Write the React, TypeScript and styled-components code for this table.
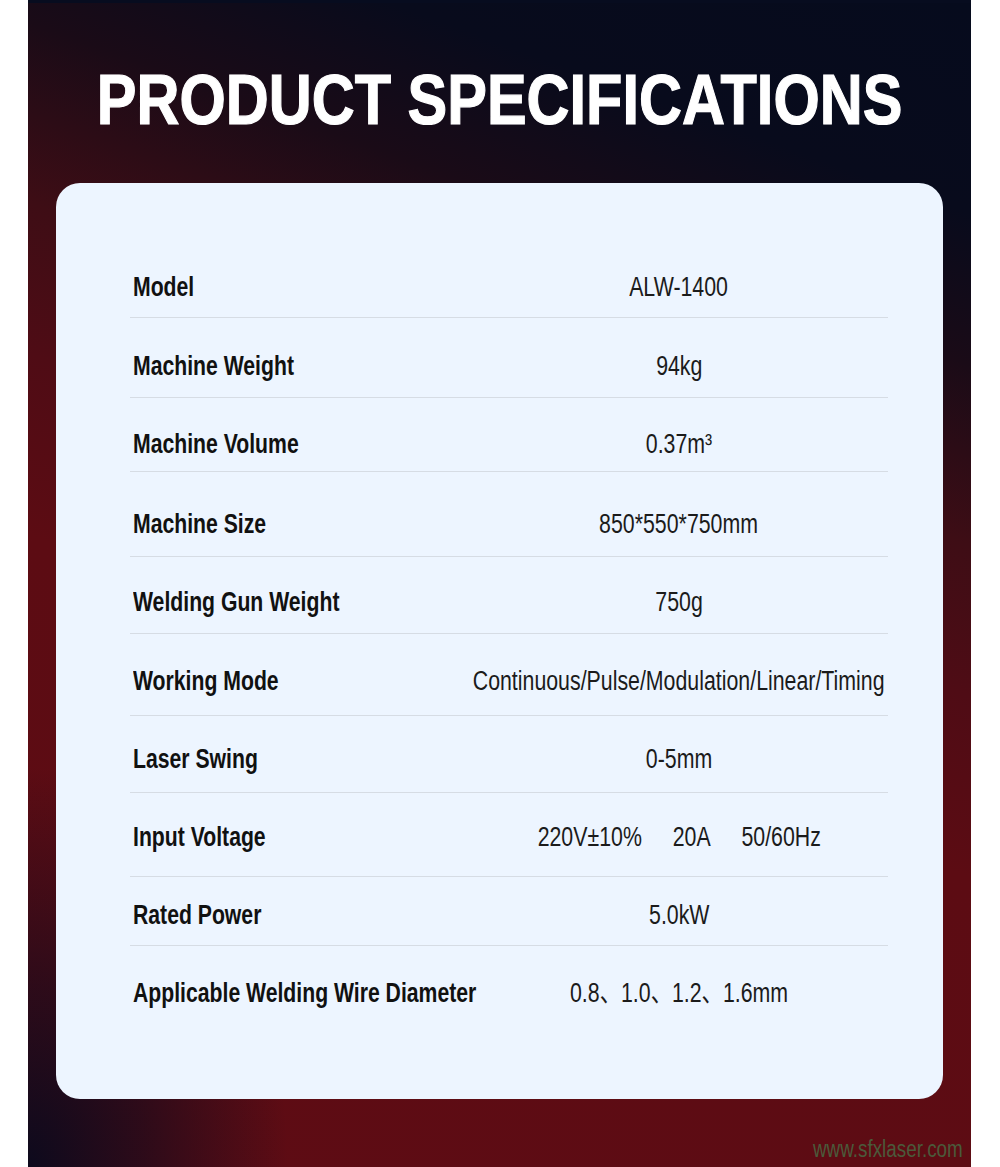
import React from "react"
import styled, { createGlobalStyle } from "styled-components"

const GlobalStyle = createGlobalStyle`
  html, body {
    margin: 0;
    padding: 0;
    background: #fff;
  }
  body {
    font-family: "Liberation Sans", Arial, "Noto Sans CJK SC", sans-serif;
  }
`

type Spec = {
  label: string
  value: string[]
  above: number
  below: number
}

// above / below = space between the separator lines and the text line
const specs: Spec[] = [
  { label: "Model", value: ["ALW-1400"], above: 0, below: 15 },
  { label: "Machine Weight", value: ["94kg"], above: 33, below: 16 },
  { label: "Machine Volume", value: ["0.37m³"], above: 31, below: 12 },
  { label: "Machine Size", value: ["850*550*750mm"], above: 37, below: 17 },
  { label: "Welding Gun Weight", value: ["750g"], above: 30, below: 16 },
  { label: "Working Mode", value: ["Continuous/Pulse/Modulation/Linear/Timing"], above: 32, below: 19 },
  { label: "Laser Swing", value: ["0-5mm"], above: 28, below: 18 },
  { label: "Input Voltage", value: ["220V±10%", "20A", "50/60Hz"], above: 29, below: 24 },
  { label: "Rated Power", value: ["5.0kW"], above: 23, below: 15 },
  { label: "Applicable Welding Wire Diameter", value: ["0.8、1.0、1.2、1.6mm"], above: 32, below: 0 },
]

function App() {
  return (
    <>
      <GlobalStyle />
      <Page>
        <Title>PRODUCT SPECIFICATIONS</Title>
        <Card>
          {specs.map((s, i) => (
            <Row key={s.label} $above={s.above} $below={s.below} $last={i === specs.length - 1}>
              <Label>
                <LabelText>{s.label}</LabelText>
              </Label>
              <Value>
                <ValueText>
                  {s.value.map((v) => (
                    <span key={v}>{v}</span>
                  ))}
                </ValueText>
              </Value>
            </Row>
          ))}
        </Card>
        <Watermark>
          <WatermarkText>www.sfxlaser.com</WatermarkText>
        </Watermark>
      </Page>
    </>
  )
}

const Page = styled.div`
  width: 943px;
  height: 1167px;
  margin-left: 28px;
  box-sizing: border-box;
  border-top: 3px solid #070c1f;
  padding-top: 61px;
  display: flex;
  flex-direction: column;
  align-items: center;
  overflow: hidden;
  background:
    radial-gradient(ellipse 260px 400px at 0% 100%, rgba(13, 10, 29, 1) 0%, rgba(13, 10, 29, 0.6) 45%, rgba(13, 10, 29, 0) 100%),
    linear-gradient(200deg, #060b1d 0%, #080b1c 14%, #1a0b17 24%, #3e0d15 36%, #4f0c15 46%, #5c0c13 58%, #5e0c14 100%);
`

/* no condensed face is installed, so the narrow lettering is squeezed horizontally */
const Title = styled.h1`
  margin: 0;
  font-size: 71px;
  line-height: 71px;
  font-weight: 700;
  color: #fff;
  -webkit-text-stroke: 1.2px #fff;
  white-space: nowrap;
  transform: scaleX(0.838);
`

const Card = styled.div`
  width: 887px;
  box-sizing: border-box;
  margin-top: 48px;
  padding: 89px 55px 91px 74px;
  background: #edf5ff;
  border-radius: 24px;
  display: flex;
  flex-direction: column;
`

const Row = styled.div<{ $above: number; $below: number; $last: boolean }>`
  display: grid;
  grid-template-columns: 340px minmax(0, 1fr);
  align-items: center;
  padding: ${(p) => p.$above}px 0 ${(p) => p.$below}px;
  border-bottom: ${(p) => (p.$last ? "none" : "1px solid #d6dce4")};
  font-size: 27px;
  line-height: 30px;
`

const Label = styled.div`
  padding-left: 3px;
  white-space: nowrap;
`

const LabelText = styled.span`
  display: inline-block;
  font-weight: 700;
  color: #111;
  transform: scaleX(0.785);
  transform-origin: left center;
`

const Value = styled.div`
  display: flex;
  justify-content: center;
  white-space: nowrap;
`

const ValueText = styled.div`
  display: inline-flex;
  flex-shrink: 0;
  gap: 39px;
  font-weight: 400;
  color: #1b1b1b;
  transform: scaleX(0.79);
`

const Watermark = styled.div`
  align-self: flex-end;
  margin-top: 39px;
  padding-right: 8px;
  font-size: 23px;
  line-height: 23px;
  color: #4b5a3b;
`

const WatermarkText = styled.span`
  display: inline-block;
  transform: scaleX(0.82);
  transform-origin: right center;
`

export default App
